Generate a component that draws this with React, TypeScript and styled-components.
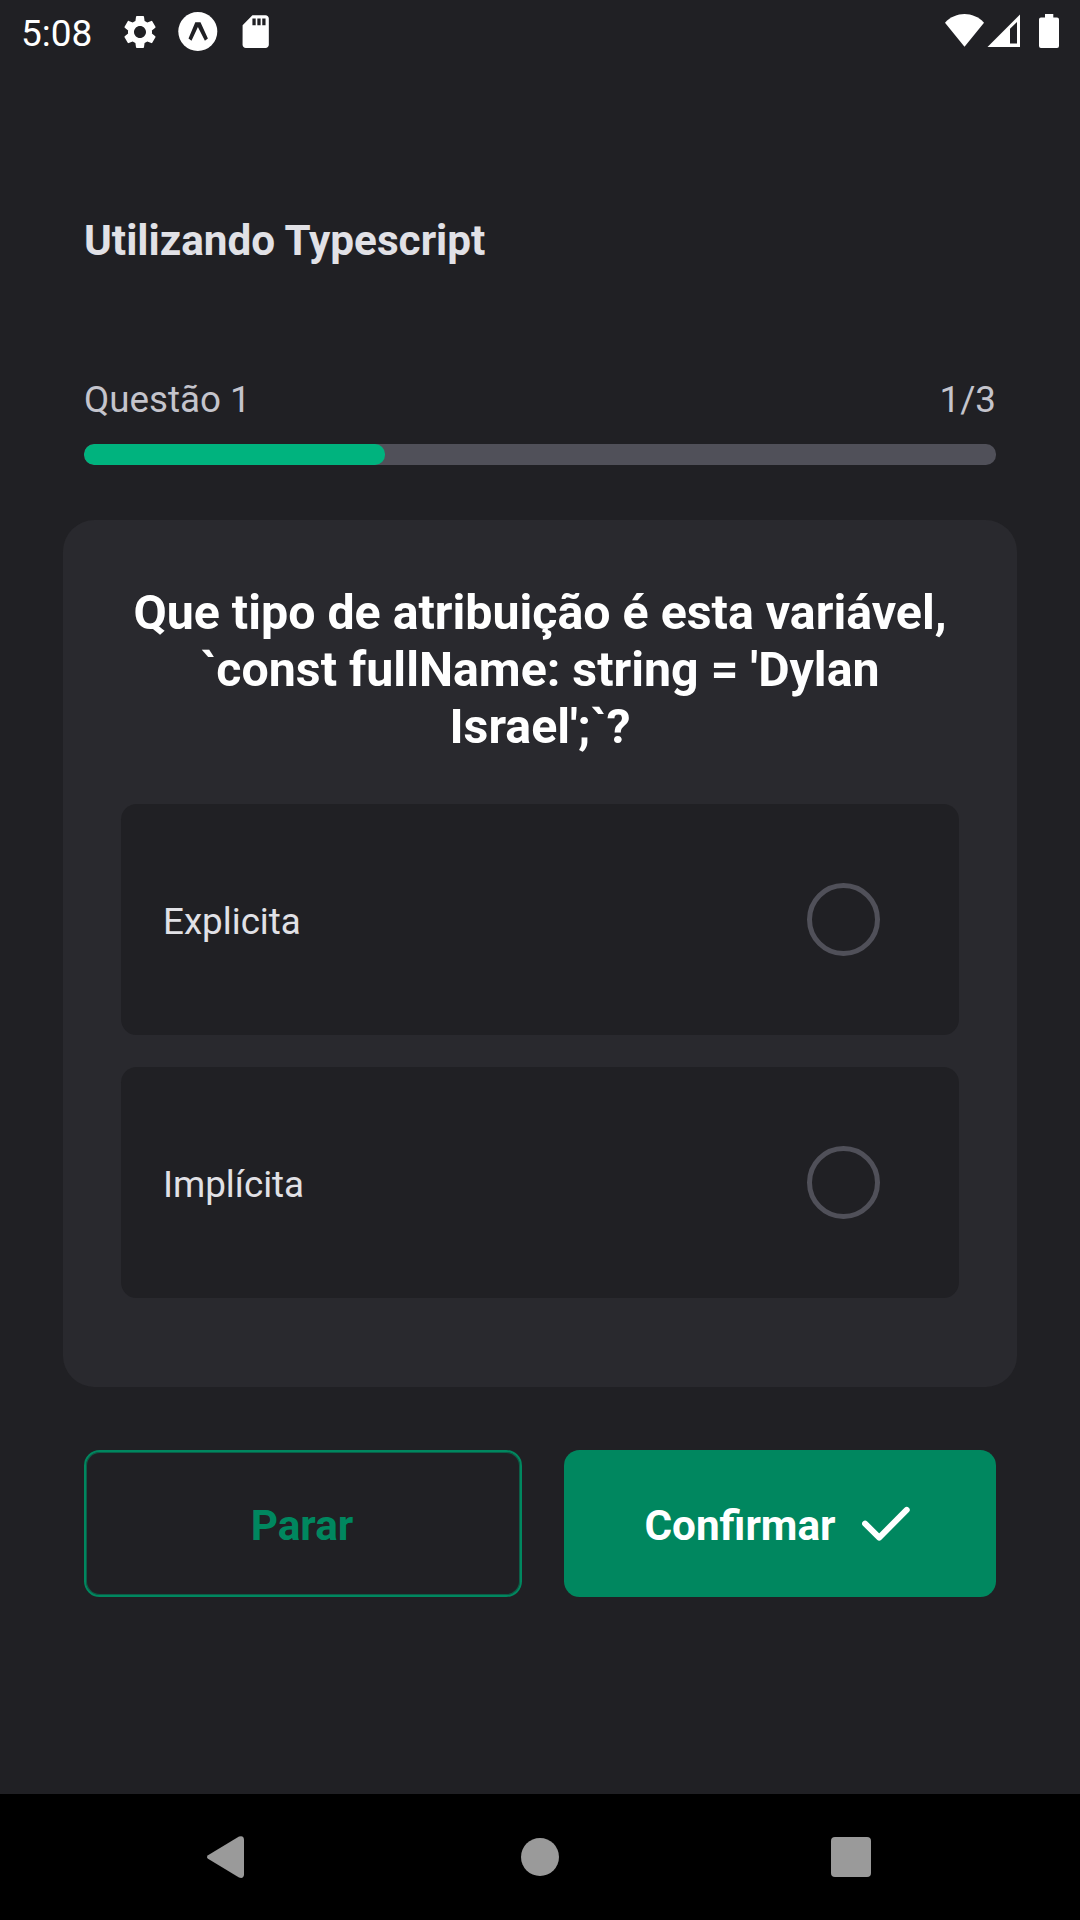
import React, { useState } from "react";
import styled, { createGlobalStyle } from "styled-components";
import { MdSettings } from "react-icons/md";

const colors = {
  background: "#202024",
  card: "#29292E",
  track: "#505059",
  brandLight: "#00B37E",
  brand: "#00875F",
  white: "#FFFFFF",
  text: "#E1E1E6",
  muted: "#C4C4CC",
  nav: "#9A9A9A",
};

const GlobalStyle = createGlobalStyle`
  * { box-sizing: border-box; }
  body {
    margin: 0;
    background: ${colors.background};
    font-family: Roboto, "Noto Sans", sans-serif;
  }
  button { font-family: inherit; }
`;

const Screen = styled.div`
  display: flex;
  flex-direction: column;
  width: 1080px;
  height: 1920px;
  overflow: hidden;
  background: ${colors.background};
`;

const StatusBar = styled.header`
  display: flex;
  justify-content: space-between;
  height: 63px;
  padding: 0 21px;
  color: ${colors.white};
`;

const StatusGroup = styled.div<{ $gap?: number }>`
  display: flex;
  align-items: center;
  gap: ${({ $gap = 0 }) => $gap}px;
`;

const Clock = styled.span`
  width: 99px;
  padding-top: 5px;
  font-size: 37px;
  line-height: 44px;
`;

const StatusIcon = styled.svg`
  display: block;
  flex: none;
`;

const Content = styled.main`
  display: flex;
  flex: 1;
  flex-direction: column;
  padding: 153px 63px 0;
`;

const Title = styled.h1`
  margin: 0 21px;
  color: ${colors.text};
  font-size: 42.25px;
  font-weight: 700;
  line-height: 50px;
`;

const Progress = styled.section`
  display: flex;
  flex-direction: column;
  gap: 22px;
  margin: 112px 21px 55px;
`;

const ProgressLabels = styled.div`
  display: flex;
  justify-content: space-between;
  color: ${colors.muted};
  font-size: 36.75px;
  line-height: 44px;
`;

const Track = styled.div`
  height: 21px;
  overflow: hidden;
  border-radius: 10px;
  background: ${colors.track};
`;

const TrackFill = styled.div`
  height: 100%;
  border-radius: 10px;
  background: ${colors.brandLight};
`;

const QuestionCard = styled.section`
  display: flex;
  flex-direction: column;
  height: 867px;
  padding: 64px 58px 0;
  border-radius: 31.5px;
  background: ${colors.card};
`;

const QuestionText = styled.h2`
  margin: 0 0 49px;
  color: ${colors.white};
  font-size: 48.3px;
  font-weight: 700;
  line-height: 57px;
  text-align: center;
  white-space: pre-line;
`;

const Options = styled.div`
  display: flex;
  flex-direction: column;
  gap: 32px;
`;

const Option = styled.button`
  display: flex;
  align-items: center;
  justify-content: space-between;
  height: 231px;
  padding: 0 79px 0 42px;
  border: 0;
  border-radius: 15.75px;
  background: ${colors.background};
  color: ${colors.text};
  font-size: 36.75px;
  line-height: 44px;
`;

const OptionLabel = styled.span`
  padding-top: 4px;
`;

const Radio = styled.span<{ $checked: boolean }>`
  width: 73px;
  height: 73px;
  border: 5px solid ${({ $checked }) => ($checked ? colors.brandLight : colors.track)};
  border-radius: 50%;
`;

const Actions = styled.div`
  display: grid;
  grid-template-columns: 438px 432px;
  gap: 42px;
  margin: 63px 21px 0;
`;

const ActionButton = styled.button<{ $outlined?: boolean }>`
  display: flex;
  align-items: center;
  justify-content: center;
  gap: 26px;
  height: 147px;
  padding: ${({ $outlined }) => ($outlined ? "5px 2px 0 0" : "5px 4px 0 0")};
  border: ${({ $outlined }) => ($outlined ? `2px solid ${colors.brand}` : "0")};
  border-radius: 15.75px;
  background: ${({ $outlined }) => ($outlined ? "transparent" : colors.brand)};
  box-shadow: ${({ $outlined }) => ($outlined ? "inset 0 0 0 1px rgba(0, 135, 95, 0.6)" : "none")};
  color: ${({ $outlined }) => ($outlined ? colors.brand : colors.white)};
  font-size: 42.25px;
  font-weight: 700;
  line-height: 50px;
`;

const CheckIcon = styled(StatusIcon)`
  margin-bottom: 5px;
`;

const NavigationBar = styled.nav`
  display: grid;
  grid-template-columns: 38px 38px 40px;
  align-items: center;
  justify-content: space-between;
  height: 126px;
  padding: 0 209px 0 206px;
  background: #000;
`;

const HomeIcon = styled(StatusIcon)`
  margin-left: 2px;
`;

const options = ["Explicita", "Implícita"];

export default function App() {
  const [selected, setSelected] = useState<string | null>(null);
  const progress = 33;

  return (
    <>
      <GlobalStyle />
      <Screen>
        <StatusBar>
          <StatusGroup>
            <Clock>5:08</Clock>
            <StatusGroup $gap={18}>
              <MdSettings size={40} />
              <StatusIcon width="40" height="39" viewBox="0 0 40 39">
                <circle cx="19.8" cy="19.5" r="19.5" fill="#fff" />
                <path
                  d="M17.300 10.200h5.200L29.900 26.600 26.900 28.700 19.900 15 13.500 28.700 10.500 26.600Z"
                  fill={colors.background}
                />
              </StatusIcon>
              <StatusIcon width="39.4" height="39.4" viewBox="0 0 24 24">
                <path
                  d="M18 2h-8L4.020 8 4 20c0 1.100.9 2 2 2h12c1.100 0 2-.9 2-2V4c0-1.100-.9-2-2-2zm-6 6h-2V4h2v4zm3 0h-2V4h2v4zm3 0h-2V4h2v4z"
                  fill="#fff"
                />
              </StatusIcon>
            </StatusGroup>
          </StatusGroup>
          <StatusIcon width="114" height="63" viewBox="945 0 114 63" fill="#fff">
            <path d="M945 22.700C956 11.200 973 11.200 984 22.700L964.500 46.700Z" />
            <path
              fillRule="evenodd"
              d="M987.500 47 1020 14.500V47ZM1010 28.700V43.500H1017V22Z"
            />
            <path d="M1045 14h8.300v3.400h3.700q2 0 2 2V46q0 2-2 2h-16q-2 0-2-2V19.400q0-2 2-2h4Z" />
          </StatusIcon>
        </StatusBar>

        <Content>
          <Title>Utilizando Typescript</Title>

          <Progress>
            <ProgressLabels>
              <span>Questão 1</span>
              <span>1/3</span>
            </ProgressLabels>
            <Track>
              <TrackFill style={{ width: `${progress}%` }} />
            </Track>
          </Progress>

          <QuestionCard>
            <QuestionText>
              {"Que tipo de atribuição é esta variável,\n`const fullName: string = 'Dylan\nIsrael';`?"}
            </QuestionText>
            <Options>
              {options.map((option) => (
                <Option key={option} onClick={() => setSelected(option)}>
                  <OptionLabel>{option}</OptionLabel>
                  <Radio $checked={selected === option} />
                </Option>
              ))}
            </Options>
          </QuestionCard>

          <Actions>
            <ActionButton $outlined>Parar</ActionButton>
            <ActionButton>
              <span>Confirmar</span>
              <CheckIcon width="50" height="40" viewBox="0 0 50 40">
                <path
                  d="M3.100 19.600 17.200 33.600 44.700 5.900"
                  fill="none"
                  stroke="#fff"
                  strokeWidth="6"
                  strokeLinecap="round"
                  strokeLinejoin="round"
                />
              </CheckIcon>
            </ActionButton>
          </Actions>
        </Content>

        <NavigationBar>
          <StatusIcon width="38" height="42" viewBox="0 0 38 42" fill={colors.nav}>
            <path d="M2 19.200 33 .5Q37.700-1 38 3.500V38.500Q37.700 43 33 41.500L2 22.800Q0 21 2 19.200Z" />
          </StatusIcon>
          <HomeIcon width="38" height="38" viewBox="0 0 38 38" fill={colors.nav}>
            <circle cx="19" cy="19" r="19" />
          </HomeIcon>
          <StatusIcon width="40" height="40" viewBox="0 0 40 40" fill={colors.nav}>
            <rect width="40" height="40" rx="4" />
          </StatusIcon>
        </NavigationBar>
      </Screen>
    </>
  );
}
